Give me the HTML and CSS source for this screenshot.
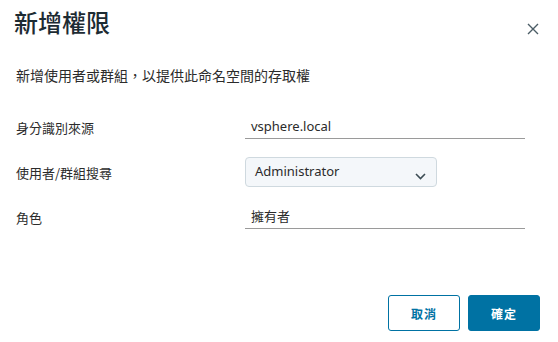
FILE: index.html
```html
<!DOCTYPE html>
<html lang="zh-Hant">
<head>
<meta charset="utf-8">
<link rel="stylesheet" href="styles.css">
</head>
<body>
<div class="dialog">
  <div class="header">
    <h1 class="title">新增權限</h1>
    <button class="close" aria-label="關閉">
      <svg width="12" height="12" viewBox="0 0 12 12"><path d="M1 1L11 11M11 1L1 11" stroke="#4b5d66" stroke-width="1.4" fill="none"/></svg>
    </button>
  </div>
  <p class="subtitle">新增使用者或群組，以提供此命名空間的存取權</p>
  <div class="form">
    <div class="row">
      <div class="label">身分識別來源</div>
      <div class="input">vsphere.local</div>
    </div>
    <div class="row">
      <div class="label">使用者/群組搜尋</div>
      <div class="select">
        <span>Administrator</span>
        <svg class="chev" width="11" height="7" viewBox="0 0 11 7"><path d="M1 1L5.5 5.5L10 1" stroke="#3c4c54" stroke-width="1.6" fill="none"/></svg>
      </div>
    </div>
    <div class="row">
      <div class="label">角色</div>
      <div class="input">擁有者</div>
    </div>
  </div>
  <div class="footer">
    <button class="btn btn-outline">取消</button>
    <button class="btn btn-primary">確定</button>
  </div>
</div>
</body>
</html>
```
FILE: styles.css
```css
html, body {
  margin: 0;
  padding: 0;
  background: #fff;
}
body {
  font-family: "Noto Sans", "Noto Sans CJK TC", sans-serif;
  color: #2b2b2b;
  width: 558px;
  height: 342px;
  overflow: hidden;
}
.dialog {
  padding: 6px 18px 0 16px;
}
.header {
  display: flex;
  justify-content: space-between;
  align-items: flex-start;
}
.title {
  margin: 0 0 0 -2px;
  font-family: "Noto Sans CJK TC", sans-serif;
  font-size: 24px;
  line-height: 32px;
  font-weight: 500;
  color: #1d2b33;
}
.close {
  margin: 17px 1px 0 0;
  padding: 0;
  border: 0;
  background: none;
  width: 12px;
  height: 12px;
  display: flex;
}
.subtitle {
  margin: 27px 0 0 0;
  font-family: "Noto Sans CJK TC", sans-serif;
  font-size: 14px;
  line-height: 20px;
  color: #2b2b2b;
}
.form {
  margin-top: 30px;
  display: flex;
  flex-direction: column;
  gap: 18px;
}
.row {
  display: flex;
  align-items: center;
}
.label {
  width: 229px;
  font-family: "Noto Sans CJK TC", sans-serif;
  font-size: 13px;
  color: #2b2b2b;
}
.input {
  width: 274px;
  height: 23px;
  padding-left: 6px;
  border-bottom: 1px solid #9a9a9a;
  font-size: 13px;
  line-height: 23px;
  color: #2b2b2b;
}
.select {
  box-sizing: border-box;
  width: 192px;
  height: 30px;
  padding: 0 10px 0 9px;
  border: 1px solid #cfd9df;
  border-radius: 4px;
  background: #f4f7fa;
  display: flex;
  align-items: center;
  justify-content: space-between;
  font-size: 13px;
  color: #2b2b2b;
}
.select span {
  margin-top: -3px;
}
.chev {
  margin-top: 9px;
}
.footer {
  margin-top: 66px;
  display: flex;
  justify-content: flex-end;
  gap: 8px;
}
.btn {
  box-sizing: border-box;
  width: 72px;
  height: 36px;
  border-radius: 3px;
  font-family: "Noto Sans CJK TC", sans-serif;
  font-size: 12px;
  font-weight: 700;
  letter-spacing: 1px;
  cursor: pointer;
}
.btn-outline {
  background: #fff;
  border: 1px solid #0072a3;
  color: #0072a3;
}
.btn-primary {
  background: #0072a3;
  border: 1px solid #0072a3;
  color: #fff;
}
```
